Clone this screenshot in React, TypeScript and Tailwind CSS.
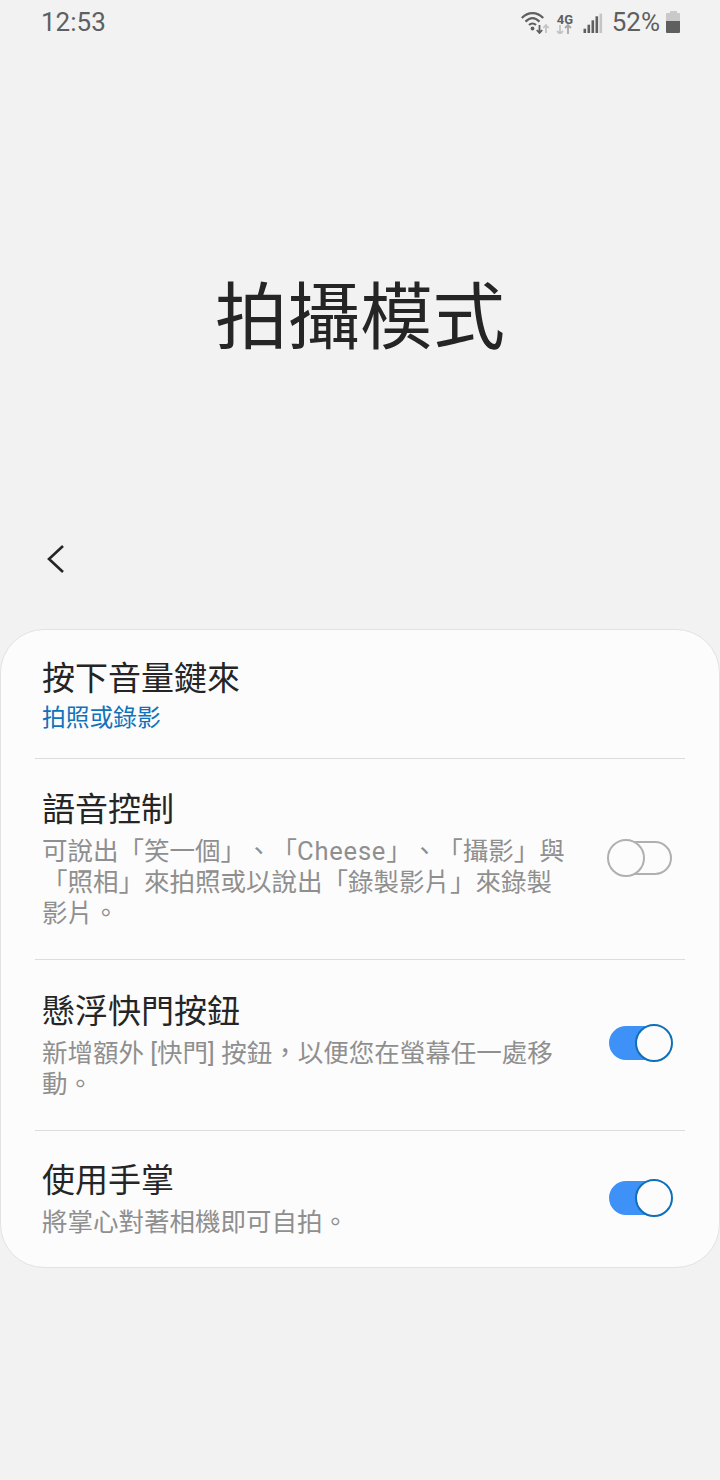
import React from 'react';

const cjk = "font-['Roboto','Noto_Sans_CJK_TC',sans-serif] [text-spacing-trim:space-all]";

const Toggle: React.FC<{ on: boolean }> = ({ on }) => (
  <div className="relative h-[38px] w-[66px] shrink-0">
    {on ? (
      <>
        <div className="absolute left-[2px] top-[2px] h-[34px] w-[61px] rounded-full bg-[#3e91f7]" />
        <div className="absolute right-0 top-0 h-[38px] w-[38px] rounded-full border-2 border-[#0f6fb8] bg-[#fcfcfc]" />
      </>
    ) : (
      <>
        <div className="absolute left-[1px] top-[2px] h-[34px] w-[64px] rounded-full border-2 border-[#b0b0b0]" />
        <div className="absolute left-0 top-0 h-[38px] w-[38px] rounded-full border-2 border-[#b0b0b0] bg-[#fcfcfc]" />
      </>
    )}
  </div>
);

const Row: React.FC<{
  title: string;
  lines: React.ReactNode[];
  on?: boolean;
  height: string;
  toggleTop: string;
  textTop: string;
}> = ({ title, lines, on, height, toggleTop, textTop }) => (
  <div className={`flex items-start justify-between pl-[7px] pr-[12px] ${height}`}>
    <div className={textTop}>
      <div className="text-[33px] leading-[40px] text-[#252525]">{title}</div>
      <div className="mt-[6px] text-[25.5px] leading-[31px] text-[#8f8f8f]">
        {lines.map((l, i) => (
          <div key={i} className="whitespace-nowrap">{l}</div>
        ))}
      </div>
    </div>
    {on !== undefined && (
      <div className={toggleTop}>
        <Toggle on={on} />
      </div>
    )}
  </div>
);

const StatusIcons: React.FC = () => (
  <svg width="82" height="24" viewBox="0 0 82 24" className="block">
    {/* wifi */}
    <g fill="none" stroke="#5f5f5f" strokeWidth="2.2">
      <path d="M0.8 8C7 1.4 16 1.4 22.2 8" />
      <path d="M4.5 11.6C9 7.2 14 7.2 18.5 11.6" />
      <path d="M8 15C10 13.2 13 13.2 15 15" />
    </g>
    <circle cx="11.5" cy="18.5" r="1.9" fill="#5f5f5f" />
    <path d="M18.5 15v8M15.8 20l2.7 3 2.7-3" fill="none" stroke="#5f5f5f" strokeWidth="1.8" />
    <path d="M25 23v-8M22.3 18l2.7-3 2.7 3" fill="none" stroke="#c4c4c4" strokeWidth="1.8" />
    {/* 4G arrows */}
    <path d="M39 15v9M36 21l3 3 3-3" fill="none" stroke="#c4c4c4" strokeWidth="1.8" />
    <path d="M47 24v-9M44 18l3-3 3 3" fill="none" stroke="#a8a8a8" strokeWidth="1.8" />
    {/* signal */}
    <rect x="62.5" y="18.7" width="2.6" height="4.3" fill="#5f5f5f" />
    <rect x="66.5" y="14.7" width="2.6" height="8.3" fill="#5f5f5f" />
    <rect x="70.5" y="10.3" width="2.6" height="12.7" fill="#5f5f5f" />
    <rect x="74.5" y="6.3" width="2.6" height="16.7" fill="#5f5f5f" />
    <rect x="78.5" y="3.7" width="2.6" height="19.3" fill="#c4c4c4" />
  </svg>
);

export default function App() {
  return (
    <div className={`flex h-[1480px] w-[720px] flex-col overflow-hidden bg-[#f2f2f2] ${cjk}`}>
      {/* status bar */}
      <div className="flex h-[44px] items-center justify-between pl-[41px] pr-[40px] text-[26px] text-[#5f5f5f]">
        <span>12:53</span>
        <div className="flex items-center">
          <div className="relative">
            <StatusIcons />
            <span className="absolute left-[36px] top-[3px] text-[13px] font-bold leading-[14px]">4G</span>
          </div>
          <span className="ml-[9px]">52%</span>
          <div className="ml-[6px] flex flex-col items-center">
            <div className="h-[2px] w-[7px] bg-[#c9c9c9]" />
            <div className="h-[20px] w-[14px] rounded-[1px] bg-[linear-gradient(#c9c9c9_38%,#5f5f5f_38%)]" />
          </div>
        </div>
      </div>

      {/* big title */}
      <div className="flex h-[490px] items-start justify-center pt-[227px] text-[72.5px] leading-[96px] text-[#252525]">
        拍攝模式
      </div>

      {/* back */}
      <div className="flex h-[95px] items-start pl-[46px] pt-[10px]">
        <svg width="20" height="30" viewBox="0 0 20 30" fill="none" stroke="#252525" strokeWidth="2.6">
          <path d="M17 2 3 15l14 13" />
        </svg>
      </div>

      {/* card */}
      <div className="h-[639px] rounded-[44px] border border-[#e2e2e2] bg-[#fcfcfc] px-[34px]">
        <div className="h-[129px] border-b border-[#dcdcdc] pl-[7px] pt-[29px]">
          <div className="text-[33px] leading-[40px] text-[#252525]">按下音量鍵來</div>
          <div className="mt-[4px] text-[23.75px] leading-[31px] text-[#0f72ba]">拍照或錄影</div>
        </div>
        <div className="border-b border-[#dcdcdc]">
          <Row
            title="語音控制"
            lines={[
              <>可說出「笑一個」、「<span className="tracking-[0.8px]">Cheese</span>」、「攝影」與</>,
              '「照相」來拍照或以說出「錄製影片」來錄製',
              '影片。',
            ]}
            on={false}
            height="h-[200px]"
            textTop="pt-[31px]"
            toggleTop="pt-[80px]"
          />
        </div>
        <div className="border-b border-[#dcdcdc]">
          <Row
            title="懸浮快門按鈕"
            lines={['新增額外 [快門] 按鈕，以便您在螢幕任一處移', '動。']}
            on
            height="h-[170px]"
            textTop="pt-[32px]"
            toggleTop="pt-[64px]"
          />
        </div>
        <Row
          title="使用手掌"
          lines={['將掌心對著相機即可自拍。']}
          on
          height="h-[136px]"
          textTop="pt-[30px]"
          toggleTop="pt-[48px]"
        />
      </div>
    </div>
  );
}
